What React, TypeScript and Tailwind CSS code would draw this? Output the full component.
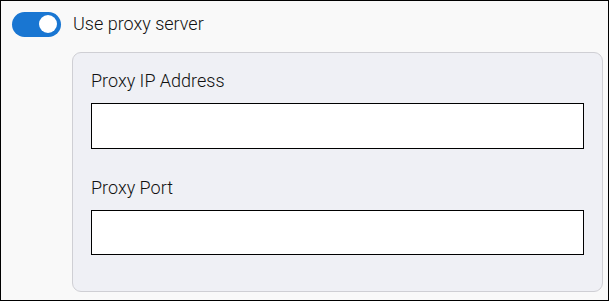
import React from "react";

export default function App() {
  return (
    <div
      className="w-[609px] h-[301px] border border-black bg-[#f9f9f9] flex flex-col"
      style={{ fontFamily: "Roboto, 'Liberation Sans', sans-serif" }}
    >
      <div className="flex items-center pl-[11px] pt-[7px] h-[32px] box-content">
        <div className="w-[49px] h-[25px] rounded-full bg-[#1976d2] flex items-center justify-end pr-[4px]">
          <div className="w-[18px] h-[18px] rounded-full bg-white" />
        </div>
        <span className="ml-[12px] text-[18px] leading-[24px] font-light text-[#111]">Use proxy server</span>
      </div>
      <div className="ml-[71px] mr-[5px] mt-[12px] h-[240px] rounded-[9px] border border-[#cfcfd4] bg-[#eff0f5] px-[18px] pt-[16px] flex flex-col gap-[27px]">
        <div className="flex flex-col">
          <label className="text-[18px] leading-[24px] font-light text-[#111]">Proxy IP Address</label>
          <input className="mt-[10px] h-[46px] w-full border border-black bg-white outline-none" />
        </div>
        <div className="flex flex-col">
          <label className="text-[18px] leading-[24px] font-light text-[#111]">Proxy Port</label>
          <input className="mt-[10px] h-[45px] w-full border border-black bg-white outline-none" />
        </div>
      </div>
    </div>
  );
}
